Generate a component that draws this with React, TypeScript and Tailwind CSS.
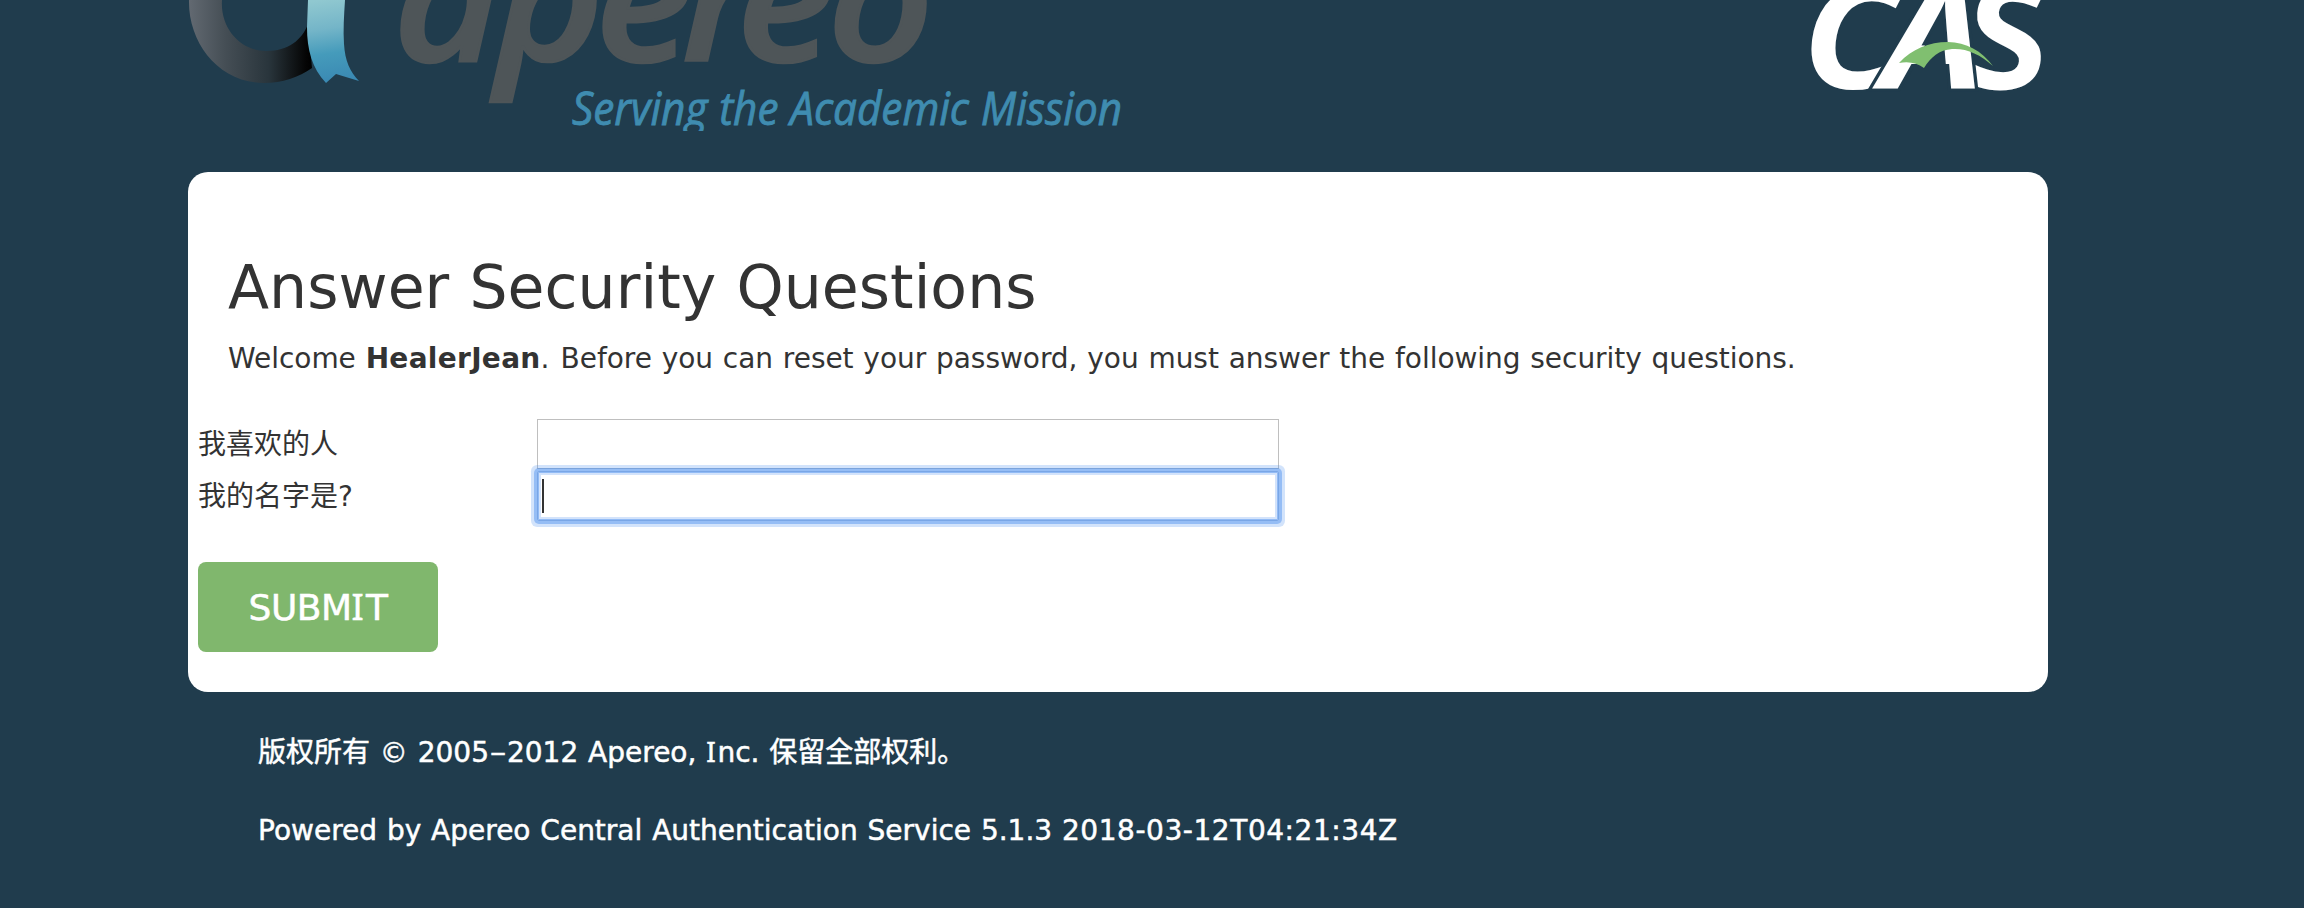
function ApereoLogo() {
  return (
    <svg width="960" height="131" viewBox="188 0 960 131" className="block shrink-0" role="img" aria-label="Apereo">
      <defs>
        <linearGradient id="ring" gradientUnits="userSpaceOnUse" x1="188" y1="0" x2="312" y2="0">
          <stop offset="0" stopColor="#636a72" />
          <stop offset="0.3" stopColor="#454e55" />
          <stop offset="0.65" stopColor="#29353c" />
          <stop offset="0.95" stopColor="#050505" />
          <stop offset="1" stopColor="#000000" />
        </linearGradient>
        <linearGradient id="ribbon" gradientUnits="userSpaceOnUse" x1="322" y1="0" x2="334" y2="82">
          <stop offset="0" stopColor="#90c8d0" />
          <stop offset="0.35" stopColor="#74b5c8" />
          <stop offset="0.65" stopColor="#459bbb" />
          <stop offset="1" stopColor="#3a89b3" />
        </linearGradient>
      </defs>
      <path
        fill="url(#ring)"
        d="M189 0C188 42 218 83 264 83C282 83 299 77 312 68L308 24C302 40 288 51 266 51C240 51 220 28 222 0Z"
      />
      <path
        fill="url(#ribbon)"
        d="M308 0H345C344 16 343 30 344 44C345 61 350 72 359 81L336 74L326 83C312 68 307 50 307 27Z"
      />
      <text
        transform="scale(1.08 1)"
        y="60.500"
        x="364 458.500 551 631 682 766"
        fill="#4e5558"
        fontSize="172"
        stroke="#4e5558"
        strokeWidth="2.500"
        className="font-['Open_Sans',sans-serif] font-semibold italic"
      >
        apereo
      </text>
      <text
        x="572"
        y="125"
        fill="#3f8cb0"
        fontSize="46"
        stroke="#3f8cb0"
        strokeWidth="0.900"
        textLength="550"
        lengthAdjust="spacingAndGlyphs"
        className="font-['Open_Sans',sans-serif] italic"
      >
        Serving the Academic Mission
      </text>
    </svg>
  );
}

function CasLogo() {
  return (
    <svg width="248" height="131" viewBox="1800 0 248 131" className="block shrink-0" role="img" aria-label="CAS">
      <g fill="#ffffff" fontSize="146" className="font-['Open_Sans',sans-serif] font-bold">
        <text transform="translate(1802 89) scale(1.08 1)" className="italic">
          C
        </text>
        <text transform="translate(1964 89) skewX(-4)">S</text>
        <text
          transform="translate(1882 89) scale(1.12 1)"
          className="italic"
          stroke="#203c4d"
          strokeWidth="6"
          paintOrder="stroke"
        >
          A
        </text>
      </g>
      <path fill="#203c4d" d="M1926 43H1944L1948 90H1903Z" />
      <path
        fill="#80bf70"
        d="M1899 63C1912 49 1929 42 1948 42C1966 42 1982 51 1993 66C1980 54 1966 48 1952 49C1939 50 1931 57 1924 68C1917 63 1909 61 1899 63Z"
      />
    </svg>
  );
}

function SerifI() {
  return <span className="font-['Noto_Sans',sans-serif] tracking-[0.060em]">I</span>;
}

export default function App() {
  return (
    <div className="h-[908px] w-[2304px] overflow-hidden bg-[#203c4d] pl-[188px] font-['DejaVu_Sans','Noto_Sans_CJK_SC',sans-serif] text-[28px] text-[#333] [word-spacing:0.034em]">
      <header className="flex h-[172px] w-[1860px] items-start justify-between">
        <ApereoLogo />
        <CasLogo />
      </header>
      <main className="h-[520px] w-[1860px] rounded-[20px] bg-white px-[10px] pt-[79px]">
        <h1 className="pl-[30px] text-[60px] leading-[72px] tracking-[0.060px] whitespace-nowrap">
          Answer Security Questions
        </h1>
        <p className="mt-[16px] pl-[30px] leading-[40px] tracking-[-0.040px] whitespace-nowrap">
          Welcome <strong className="tracking-[0.3px]">HealerJean</strong>
          <span className="tracking-[1.3px]">.</span> Before you can reset your password, you must answer the following
          security questions.
        </p>
        <form className="mt-[40px]">
          <div className="flex h-[52px]">
            <label className="w-[339px] leading-[52px]">我喜欢的人</label>
            <input className="h-[50px] w-[742px] border border-[#bfbfbf] bg-white" />
          </div>
          <div className="flex h-[50px]">
            <label className="w-[339px] leading-[52px]">我的名字是?</label>
            <div className="flex h-[50px] w-[742px] items-center rounded-[2px] border border-[#79a6e6] bg-white pl-[4px] shadow-[inset_0_0_0_1px_#92bbf5,inset_0_0_0_3px_#d3e3fb,0_0_0_3px_rgba(77,144,238,0.46),0_0_0_6px_rgba(77,144,238,0.25)]">
              <div className="h-[34px] w-[2px] bg-[#333]" />
            </div>
          </div>
          <button
            type="button"
            className="mt-[41px] block h-[90px] w-[240px] rounded-[8px] bg-[#80b76d] text-[36px] tracking-[-0.5px] text-white [-webkit-text-stroke:0.5px_white]"
          >
            SUBM
            <SerifI />T
          </button>
        </form>
      </main>
      <footer className="pt-[39px] pl-[70px] leading-[40px] whitespace-nowrap text-white [-webkit-text-stroke:0.5px_white]">
        <p>
          版权所有 © 2005<span className="inline-block scale-x-[1.150] px-[2px]">–</span>2012 Apereo, <SerifI />
          nc. 保留全部权利。
        </p>
        <p className="mt-[38px]">
          Powered by Apereo Central Authentication Service 5.1.3{' '}
          <span className="tracking-[0.550px]">2018-03-12T04:21:34Z</span>
        </p>
      </footer>
    </div>
  );
}
